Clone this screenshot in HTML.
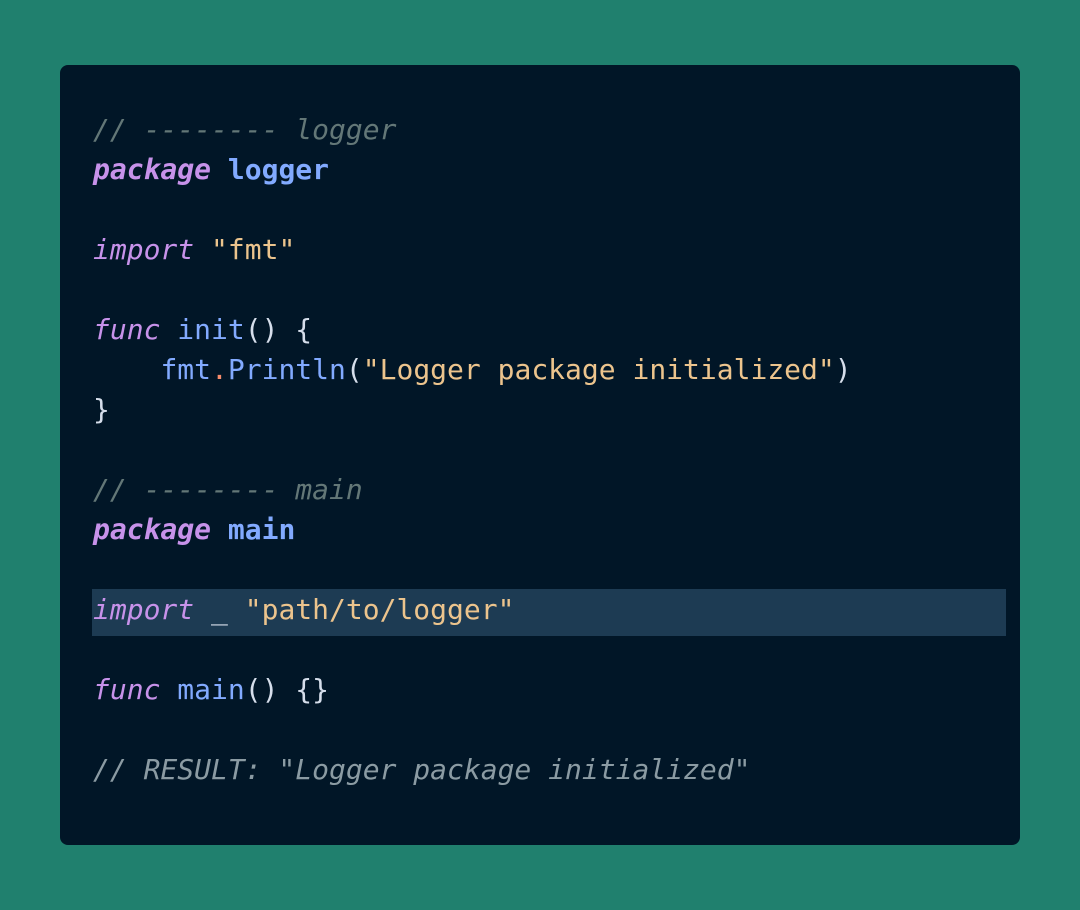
<!DOCTYPE html>
<html><head><style>
html,body{margin:0;padding:0;width:1080px;height:910px;background:#20806e;overflow:hidden}
.card{position:absolute;left:60px;top:65px;width:960px;height:780px;background:#011627;border-radius:8px}
.hl{position:absolute;left:32px;top:524px;width:914px;height:47px;background:#1d3b53}
pre{position:absolute;left:33px;top:45px;margin:0;font-family:"DejaVu Sans Mono","Liberation Mono",monospace;font-size:28px;line-height:40px;color:#d6deeb}
.c{color:#637777;font-style:italic}
.c2{color:#8b9ba3;font-style:italic}
.k{color:#c792ea;font-style:italic}
.kb{color:#c792ea;font-style:italic;font-weight:bold}
.n{color:#82aaff;font-weight:bold}
.s{color:#ecc48d}
.f{color:#82aaff}
.o{color:#f78c6c}
</style></head><body>
<div class="card"><div class="hl"></div>
<pre><span class="c">// -------- logger</span>
<span class="kb">package</span> <span class="n">logger</span>

<span class="k">import</span> <span class="s">"fmt"</span>

<span class="k">func</span> <span class="f">init</span>() {
    <span class="f">fmt</span><span class="o">.</span><span class="f">Println</span>(<span class="s">"Logger package initialized"</span>)
}

<span class="c">// -------- main</span>
<span class="kb">package</span> <span class="n">main</span>

<span class="k">import</span> <span class="c" style="font-style:normal;color:#d6deeb">_</span> <span class="s">"path/to/logger"</span>

<span class="k">func</span> <span class="f">main</span>() {}

<span class="c2">// RESULT: "Logger package initialized"</span></pre>
</div>
</body></html>
